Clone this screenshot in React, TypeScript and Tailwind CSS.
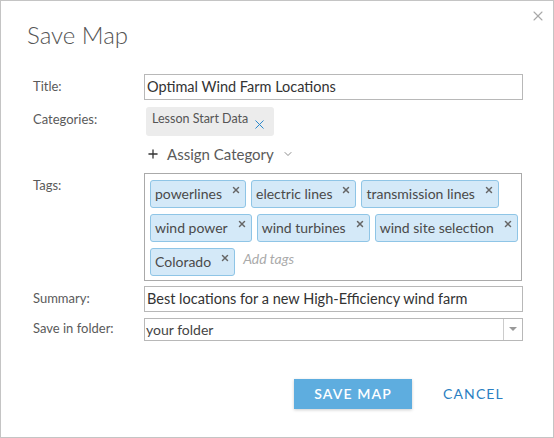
import { X, Plus, ChevronDown } from "lucide-react";

const tagRows = [
  ["powerlines", "electric lines", "transmission lines"],
  ["wind power", "wind turbines", "wind site selection"],
];

function Tag({ label }: { label: string }) {
  return (
    <span className="flex h-[28px] shrink-0 items-center whitespace-nowrap rounded-[3px] border border-[#8fc5e6] bg-[#d4e9f8] pl-[4px] pr-[4px] text-[14px] text-[#4a4a4a]">
      <span>{label}</span>
      <X size={10} strokeWidth={3.6} color="#666" className="ml-[9px] -mt-[8px]" />
    </span>
  );
}

export default function App() {
  return (
    <div
      className="relative h-[438px] w-[554px] border border-[#c4c4c4] bg-white"
      style={{ fontFamily: "Lato, 'Open Sans', sans-serif" }}
    >
      <button className="absolute right-[7px] top-[7px] text-[#a8a8a8]">
        <X size={16} strokeWidth={1.6} />
      </button>

      <div className="pl-[26px] pt-[18px] text-[24px] font-light leading-[32px] text-[#555]">Save Map</div>

      <div className="mt-[23px] pl-[32px] pr-[30px] text-[13px] text-[#5a5a5a]">
        <div className="flex items-center">
          <div className="w-[111px]">Title:</div>
          <div className="flex h-[26px] flex-1 items-center border border-[#b8b8b8] px-[2px] text-[14.5px] text-[#333]">
            Optimal Wind Farm Locations
          </div>
        </div>

        <div className="mt-[7px] flex items-start">
          <div className="w-[111px] pt-[3px]">Categories:</div>
          <div className="flex-1 pl-[2px]">
            <span className="inline-flex h-[29px] items-center rounded-[3px] bg-[#ececec] pl-[6px] pr-[7px] text-[12.5px] text-[#555]">
              <span className="-mt-[5px]">Lesson Start Data</span>
              <X size={15} strokeWidth={1.6} color="#2a88cc" className="ml-[4px] mt-[5px]" />
            </span>
            <div className="mt-[7px] flex items-center text-[15px] text-[#5a5a5a]">
              <Plus size={14} strokeWidth={2.2} className="text-[#333]" />
              <span className="ml-[7px]">Assign Category</span>
              <ChevronDown size={12} strokeWidth={1.5} className="ml-[8px] text-[#666]" />
            </div>
          </div>
        </div>

        <div className="mt-[7px] flex items-start">
          <div className="w-[111px] pt-[3px]">Tags:</div>
          <div className="h-[108px] w-[378px] border border-[#aaa] px-[5px] pt-[6px]">
            <div className="flex flex-col gap-[6px]">
              {tagRows.map((row, i) => (
                <div key={i} className="flex gap-[5px]">
                  {row.map((t) => (
                    <Tag key={t} label={t} />
                  ))}
                </div>
              ))}
              <div className="flex items-center gap-[8px]">
                <Tag label="Colorado" />
                <span className="-mt-[6px] text-[14px] italic text-[#aaa]">Add tags</span>
              </div>
            </div>
          </div>
        </div>

        <div className="mt-[5px] flex items-center">
          <div className="w-[111px]">Summary:</div>
          <div className="flex h-[26px] flex-1 items-center border border-[#b8b8b8] px-[2px] text-[14.5px] text-[#333]">
            Best locations for a new High-Efficiency wind farm
          </div>
        </div>

        <div className="mt-[6px] flex items-center">
          <div className="w-[111px]">Save in folder:</div>
          <div className="flex h-[23px] flex-1 items-center border border-[#b8b8b8] text-[14px] text-[#444]">
            <span className="flex-1 px-[1px]">your folder</span>
            <span className="flex h-full w-[19px] items-center justify-center border-l border-[#ccc]">
              <span className="h-0 w-0 border-l-[4px] border-r-[4px] border-t-[4px] border-l-transparent border-r-transparent border-t-[#999]" />
            </span>
          </div>
        </div>
      </div>

      <div className="mt-[38px] flex items-center pl-[293px]">
        <button className="h-[30px] w-[118px] bg-[#5eaddf] text-[14px] font-semibold tracking-[0.08em] text-white shadow-[0_1px_3px_rgba(0,0,0,0.2)]">
          SAVE MAP
        </button>
        <button className="ml-[31px] text-[14px] tracking-[0.08em] text-[#2b7fc2]">CANCEL</button>
      </div>
    </div>
  );
}
